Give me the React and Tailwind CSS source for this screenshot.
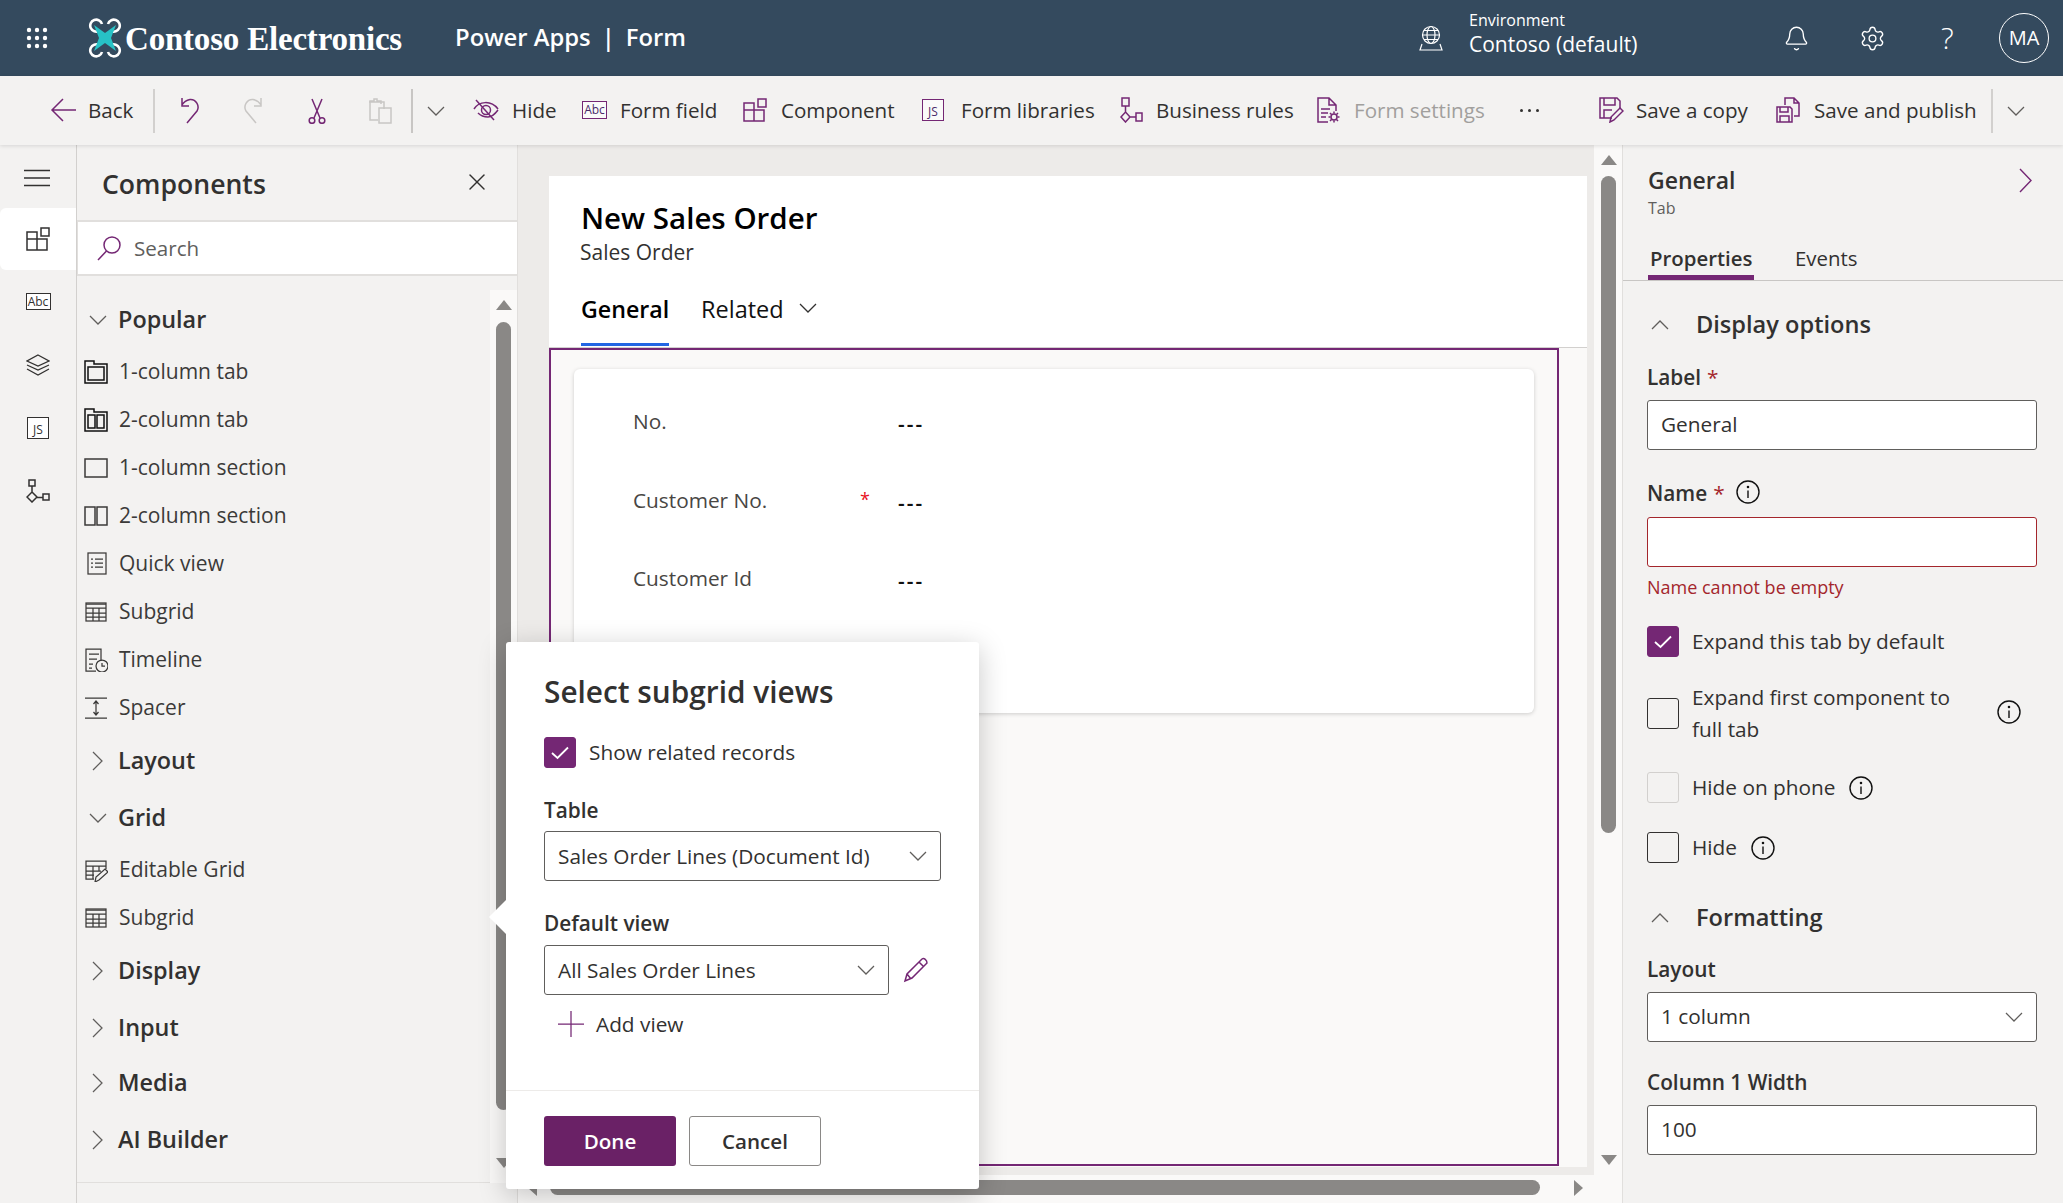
import { Bell, Settings, X } from "lucide-react";

const PURPLE = "#742774";

function Ic({ w = 24, h = 24, c = PURPLE, sw = 1.5, children, className }) {
  return (
    <svg width={w} height={h} viewBox={`0 0 ${w} ${h}`} fill="none" stroke={c} strokeWidth={sw} className={className}>
      {children}
    </svg>
  );
}

function Chevron({ dir = "down", size = 18, c = "#605e5c" }) {
  const d = {
    down: "M1 1 L9 9 L17 1",
    up: "M1 9 L9 1 L17 9",
    right: "M1 1 L10 10 L1 19",
  }[dir];
  const w = dir === "right" ? 12 : size;
  const h = dir === "right" ? 20 : 10;
  return <Ic w={w} h={h} c={c} sw={1.25}><path d={d} /></Ic>;
}

function Tri({ dir, c = "#8a8886" }) {
  const pts = { up: "0,10 8,0 16,10", down: "0,0 8,10 16,0", right: "0,0 9,8 0,16", left: "9,0 0,8 9,16" }[dir];
  const side = dir === "up" || dir === "down";
  return (
    <svg width={side ? 16 : 9} height={side ? 10 : 16}>
      <polygon points={pts} fill={c} />
    </svg>
  );
}

function Info({ c = "#111" }) {
  return (
    <Ic w={24} h={24} c={c} sw={1.4}>
      <circle cx="12" cy="12" r="11" />
      <path d="M12 10.5V18" />
      <circle cx="12" cy="7" r="0.6" fill={c} />
    </Ic>
  );
}

function Logo() {
  return (
    <svg width="34" height="40" viewBox="0 0 34 40" fill="none">
      <g stroke="#fff" strokeWidth="2.6">
        <path d="M11 13 A6 6 0 1 1 14 6" />
        <path d="M23 13 A6 6 0 1 0 20 6" />
        <path d="M11 27 A6 6 0 1 0 14 34" />
        <path d="M23 27 A6 6 0 1 1 20 34" />
      </g>
      <path d="M6 7 L17 15 L28 7 L23 20 L28 33 L17 25 L6 33 L11 20 Z" fill="#27c2c6" />
    </svg>
  );
}

function Waffle() {
  const pts = [3, 11, 19];
  return (
    <svg width="22" height="22" fill="#fff">
      {pts.map((y) => pts.map((x) => <circle key={`${x}-${y}`} cx={x} cy={y} r="2.2" />))}
    </svg>
  );
}

function Globe() {
  return (
    <Ic w={26} h={26} c="#fff" sw={1.2}>
      <circle cx="13" cy="10" r="8.5" />
      <ellipse cx="13" cy="10" rx="4" ry="8.5" />
      <path d="M4.5 10h17M6 5.5h14M6 14.5h14M4 19l-2 6h22l-2-6M2 25h22" />
    </Ic>
  );
}

const BoxText = ({ text, className }) => (
  <span className={`flex items-center justify-center bg-white/60 border-[1.5px] border-[#742774] text-[#4b2a6b] leading-none ${className}`}>
    {text}
  </span>
);

const icons = {
  back: <Ic w={26} h={24}><path d="M13 1 L2 12 L13 23 M2 12 H26" /></Ic>,
  undo: <Ic w={20} h={26}><path d="M7 25 L17 13 C20 8 16 1 10 1.5 C7 2 4 3.5 2 7 M2 0 V8 H9" /></Ic>,
  redo: <Ic w={20} h={26} c="#c8c6c4"><path d="M13 25 L3 13 C0 8 4 1 10 1.5 C13 2 16 3.5 18 7 M18 0 V8 H11" /></Ic>,
  cut: <Ic w={18} h={26}><path d="M4 1 L12 20 M14 1 L6 20" /><circle cx="4" cy="22.5" r="2.8" /><circle cx="14" cy="22.5" r="2.8" /></Ic>,
  paste: <Ic w={24} h={26} c="#c8c6c4"><path d="M13 6V3H9V1H6v2H2v19h8M1 4h15v7" /><rect x="11" y="10" width="12" height="15" /></Ic>,
  hide: <Ic w={26} h={24}><path d="M1 11 C6 3 18 2 25 11 M5 15 C8 18 11 19 15 19 C19 19 22 16 25 12" /><circle cx="13" cy="12" r="4.5" /><path d="M3 2 L21 22" /></Ic>,
  field: <BoxText text="Abc" className="w-[25px] h-[18px] text-[12px]" />,
  comp: <Ic w={24} h={24}><path d="M1 5 h10 v7 h10 v11 H1 Z M11 12 v11 M1 12 h10" /><rect x="15" y="1" width="8" height="8" /></Ic>,
  js: <BoxText text="JS" className="w-[22px] h-[22px] text-[12px] pt-[3px]" />,
  rules: <Ic w={24} h={26}><rect x="3" y="1" width="7" height="8" /><path d="M6.5 9V15M11 20H17M6.5 15l4.5 5-4.5 5L2 20z" /><rect x="17" y="16" width="6" height="8" /></Ic>,
  settings: <Ic w={24} h={26}><path d="M12 25H2V1h11l7 7v6M13 1v7h7M5 12h9M5 16h7M5 20h5" /><circle cx="18" cy="20" r="3" /><path d="M18 14.5v2M18 23.5v2M12.5 20h2M21.5 20h2M14 16l1.5 1.5M20.5 22.5L22 24M14 24l1.5-1.5M20.5 17.5L22 16" /></Ic>,
  copy: <Ic w={26} h={26}><path d="M14 21H2V1h17l3 3v8M6 1v7h11V1M6 21v-8h8" /><path d="M12 25 L13 20 L22 11 L25 14 L16 23 Z" /></Ic>,
  publish: <Ic w={26} h={26}><path d="M2 10h13l2 2v13H2z M5 10v5h8v-5M5 25v-6h9v6" /><path d="M10 8V1h9l5 5v13h-5M19 1v5h5" /></Ic>,
};

function Sep({ className = "bg-[#d2d0ce]" }) {
  return <div className={`w-[2px] h-[44px] shrink-0 ${className}`} />;
}

function Btn({ w, icon, label, muted, box = "w-[38px]" }) {
  return (
    <div className={`${w} flex items-center shrink-0`}>
      <span className={`${box} shrink-0 flex items-center`}>{icon}</span>
      <span className={`whitespace-nowrap ${muted ? "text-[#a19f9d]" : "text-[#323130]"}`}>{label}</span>
    </div>
  );
}

function Header() {
  return (
    <header className="h-[76px] shrink-0 bg-[#344a5e] text-white flex items-center">
      <div className="w-[88px] pl-[26px] shrink-0"><Waffle /></div>
      <Logo />
      <span className="[font-family:'Liberation_Serif',serif] font-bold text-[33px] ml-[3px] w-[330px] tracking-[-0.2px] pt-[3px]">Contoso Electronics</span>
      <span className="text-[23.8px] font-semibold">Power Apps</span>
      <span className="text-[23.8px] font-semibold mx-[11px]">|</span>
      <span className="text-[23.8px] font-semibold">Form</span>
      <div className="ml-auto flex items-center">
        <Globe />
        <div className="ml-[25px] w-[314px] mb-[9px]">
          <div className="text-[16px] leading-[20px] mb-[1px]">Environment</div>
          <div className="text-[21px] leading-[26px]">Contoso (default)</div>
        </div>
        <Bell size={27} strokeWidth={1.2} />
        <Settings size={27} strokeWidth={1.2} className="ml-[49px]" />
        <span className="ml-[55px] text-[30px] font-light leading-none w-[20px]">?</span>
        <div className="ml-[38px] mr-[14px] w-[50px] h-[50px] rounded-full border border-white flex items-center justify-center text-[20px]">MA</div>
      </div>
    </header>
  );
}

function Toolbar() {
  return (
    <div className="relative z-10 h-[69px] shrink-0 bg-[#f3f2f1] pl-[50px] flex items-center text-[20.6px] shadow-[0_1px_4px_rgba(0,0,0,0.12)]">
      <div className="w-[103px] flex items-center shrink-0">
        <span className="w-[38px]">{icons.back}</span>
        <span className="text-[#323130]">Back</span>
      </div>
      <Sep />
      <div className="w-[63px] flex justify-center shrink-0 ml-[3px]">{icons.undo}</div>
      <div className="w-[64px] flex justify-center shrink-0">{icons.redo}</div>
      <div className="w-[63px] flex justify-center shrink-0">{icons.cut}</div>
      <div className="w-[63px] flex justify-center shrink-0">{icons.paste}</div>
      <Sep className="bg-[#c8c6c4]" />
      <div className="w-[60px] pl-[14px] shrink-0"><Chevron /></div>
      <Btn w="w-[109px]" box="w-[39px]" icon={icons.hide} label="Hide" />
      <Btn w="w-[161px]" icon={icons.field} label="Form field" />
      <Btn w="w-[179px]" icon={icons.comp} label="Component" />
      <Btn w="w-[197px]" box="w-[39px]" icon={icons.js} label="Form libraries" />
      <Btn w="w-[197px]" box="w-[37px]" icon={icons.rules} label="Business rules" />
      <Btn w="w-[203px]" icon={icons.settings} label="Form settings" muted />
      <div className="w-[79px] shrink-0 pl-[1px] flex gap-[5px]">
        <i className="w-[3px] h-[3px] rounded-full bg-[#323130]" />
        <i className="w-[3px] h-[3px] rounded-full bg-[#323130]" />
        <i className="w-[3px] h-[3px] rounded-full bg-[#323130]" />
      </div>
      <Btn w="w-[177px]" icon={icons.copy} label="Save a copy" />
      <Btn w="w-[216px]" box="w-[39px]" icon={icons.publish} label="Save and publish" />
      <Sep />
      <div className="pl-[14px]"><Chevron /></div>
    </div>
  );
}

function Rail() {
  const rowClass = "h-[63px] flex items-center justify-center";
  const dark = "#323130";
  return (
    <nav className="w-[77px] shrink-0 border-r border-[#d2d0ce] bg-[#f3f2f1] flex flex-col">
      <div className="h-[63px] flex items-center justify-center pt-[2px] pr-[2px]">
        <Ic w={26} h={18} c={dark}><path d="M0 1.5h26M0 9h26M0 16.5h26" /></Ic>
      </div>
      <div className="h-[62px] bg-white rounded-l-md flex items-center justify-center">
        <Ic w={24} h={24} c={dark}><path d="M1 5 h10 v7 h10 v11 H1 Z M11 12 v11 M1 12 h10" /><rect x="15" y="1" width="8" height="8" /></Ic>
      </div>
      <div className={rowClass}><span className="w-[25px] h-[17px] border border-[#323130] bg-white text-[12px] leading-none text-[#323130] flex items-center justify-center">Abc</span></div>
      <div className={rowClass}>
        <Ic w={24} h={22} c={dark} sw={1.3}><path d="M12 1 L23 7 L12 12 L1 7 Z M1 11 L12 16 L23 11 M1 15 L12 21 L23 15" /></Ic>
      </div>
      <div className={rowClass}><span className="w-[22px] h-[22px] border border-[#323130] bg-white text-[12px] leading-none text-[#323130] pt-[4px] flex items-center justify-center">JS</span></div>
      <div className={rowClass}><Ic w={24} h={24} c={dark}><rect x="3" y="1" width="6" height="6" /><path d="M6 7v7M10.5 18.5H17M6 13l5 5-5 5-5-5z" /><rect x="17" y="15" width="6" height="6" /></Ic></div>
    </nav>
  );
}

const li = {
  tab1: <Ic c="#111"><path d="M1 23V1h9v3h13v19z" /><rect x="4" y="7" width="16" height="13" /></Ic>,
  tab2: <Ic c="#111"><path d="M1 23V1h9v3h13v19z" /><rect x="4" y="7" width="7" height="13" /><rect x="13" y="7" width="7" height="13" /></Ic>,
  sec1: <Ic c="#3b3a39"><rect x="1" y="3" width="22" height="18" /></Ic>,
  sec2: <Ic c="#3b3a39"><rect x="1" y="3" width="10" height="18" /><rect x="13" y="3" width="10" height="18" /></Ic>,
  quick: <Ic c="#3b3a39" sw={1.25}><rect x="4" y="1" width="18" height="21" /><path d="M7 7h2M11 7h8M7 11h2M11 11h8M7 15h2M11 15h8" /></Ic>,
  sub: <Ic c="#3b3a39" sw={1.25}><rect x="2" y="3" width="20" height="18" /><path d="M2 8h20M2 13h20M2 17h20M9 8v13M15 8v13M2 4h20" /></Ic>,
  time: <Ic c="#3b3a39" sw={1.25}><path d="M12 23H2V1h15v12M5 6h10M5 11h8M5 16h4M5 20h3" /><circle cx="18" cy="18" r="6" /><path d="M18 15v3h3" /></Ic>,
  spacer: <Ic c="#3b3a39" sw={1.25}><path d="M1 2h22M1 22h22M12 6v12M9.5 8L12 5l2.5 3M9.5 16l2.5 3 2.5-3" /></Ic>,
  edit: <Ic c="#3b3a39" sw={1.25}><path d="M10 21H2V3h20v8M2 8h20M2 13h15M2 17h8M9 8v13M15 8v5" /><path d="M11 24l1-5 9-8 3 3-9 8z" /></Ic>,
};

function Head({ label, open, h }) {
  return (
    <div className={`${h} flex items-center`}>
      <span className="w-[41px] flex justify-center shrink-0">
        {open ? <Chevron /> : <Chevron dir="right" />}
      </span>
      <span className="text-[23.4px] font-semibold text-[#323130]">{label}</span>
    </div>
  );
}

function Item({ icon, label }) {
  return (
    <div className="h-[48px] flex items-center">
      <span className="w-[35px] pl-[7px] shrink-0">{icon}</span>
      <span className="text-[21px] text-[#3b3a39] ml-[7px]">{label}</span>
    </div>
  );
}

function Components() {
  return (
    <aside className="w-[441px] shrink-0 bg-[#f3f2f1] border-r border-[#e1dfdd] flex flex-col">
      <div className="h-[75px] shrink-0 pl-[25px] pr-[26px] pt-[4px] flex items-center justify-between">
        <span className="text-[26.6px] font-semibold text-[#323130]">Components</span>
        <X size={28} strokeWidth={1.2} color="#323130" className="mb-[6px]" />
      </div>
      <div className="h-[56px] shrink-0 bg-white border-y-2 border-l border-[#e1dfdd] flex items-center pl-[18px]">
        <Ic w={26} h={26}><circle cx="16" cy="10" r="8" /><path d="M10.5 16 L2 25" /></Ic>
        <span className="text-[20.6px] text-[#605e5c] ml-[12px] pt-[1px]">Search</span>
      </div>
      <div className="flex h-[907px]">
        <div className="flex-1">
          <div className="w-full border-b border-[#e1dfdd] h-[907px] pt-[16px]">
            <Head label="Popular" open h="h-[56px]" />
            <Item icon={li.tab1} label="1-column tab" />
            <Item icon={li.tab2} label="2-column tab" />
            <Item icon={li.sec1} label="1-column section" />
            <Item icon={li.sec2} label="2-column section" />
            <Item icon={li.quick} label="Quick view" />
            <Item icon={li.sub} label="Subgrid" />
            <Item icon={li.time} label="Timeline" />
            <Item icon={li.spacer} label="Spacer" />
            <Head label="Layout" h="h-[58px]" />
            <Head label="Grid" open h="h-[56px]" />
            <Item icon={li.edit} label="Editable Grid" />
            <Item icon={li.sub} label="Subgrid" />
            <Head label="Display" h="h-[58px]" />
            <Head label="Input" h="h-[55px]" />
            <Head label="Media" h="h-[56px]" />
            <Head label="AI Builder" h="h-[58px]" />
          </div>
        </div>
        <div className="w-[27px] shrink-0 mt-[14px] h-[893px] bg-[#faf9f8] flex flex-col items-center pt-[10px]">
          <Tri dir="up" />
          <div className="w-[15px] h-[788px] mt-[12px] rounded-full bg-[#8a8886]" />
          <div className="mt-[48px]"><Tri dir="down" /></div>
        </div>
      </div>
    </aside>
  );
}

function Field({ label, star, value }) {
  return (
    <div className="h-[78.5px] flex items-start pl-[59px] text-[20.8px]">
      <span className="w-[227px] leading-[40px] text-[#484644]">{label}</span>
      <span className="w-[38px] text-[#e81123] text-[18px] leading-[38px]">{star ? "*" : ""}</span>
      <span className="leading-[46px] font-semibold text-[#111] tracking-[2px]">{value}</span>
    </div>
  );
}

function Canvas() {
  return (
    <main className="flex-1 min-w-0 flex flex-col">
      <div className="h-[1030px] flex">
        <div className="flex-1 bg-[#edebe9] pl-[31px] pr-[7px] pt-[31px] pb-[8px] flex flex-col">
          <div className="h-[172px] shrink-0 bg-white border-b border-[#d2d0ce] pl-[32px] pt-[24px]">
            <div className="text-[29.5px] leading-[36px] font-semibold text-black">New Sales Order</div>
            <div className="text-[21px] leading-[24px] mt-[4px] text-[#323130] font-medium -ml-[1px]">Sales Order</div>
            <div className="flex items-start mt-[28px]">
              <div className="h-[54px] border-b-[3px] border-[#2266e3] text-[23.2px] font-semibold leading-[34px] text-black w-[88px] mr-[32px]">General</div>
              <div className="text-[23.5px] leading-[34px] text-[#111] mr-[15px]">Related</div>
              <div className="pt-[11px]"><Chevron c="#323130" /></div>
            </div>
          </div>
          <div className="flex-1 bg-[#faf9f8]">
            <div className="w-[1010px] h-[818px] border-2 border-[#742774] pl-[23px] pt-[19px]">
              <div className="w-[960px] h-[344px] bg-white rounded-md shadow-[0_1px_4px_rgba(0,0,0,0.18)] pt-[32px]">
                <Field label="No." value="---" />
                <Field label="Customer No." star value="---" />
                <Field label="Customer Id" value="---" />
              </div>
            </div>
          </div>
        </div>
        <div className="w-[28px] shrink-0 bg-[#faf9f8] flex flex-col items-center pt-[10px] pl-[1px]">
          <Tri dir="up" />
          <div className="w-[15px] h-[657px] mt-[11px] rounded-full bg-[#8a8886]" />
          <div className="mt-[322px]"><Tri dir="down" /></div>
        </div>
      </div>
      <div className="h-[28px] shrink-0 bg-[#faf9f8] flex items-center pl-[10px] pb-[3px]">
        <Tri dir="left" />
        <div className="w-[990px] h-[15px] ml-[13px] rounded-full bg-[#8a8886]" />
        <div className="ml-[34px]"><Tri dir="right" /></div>
      </div>
    </main>
  );
}

function Input({ value, children, error, className = "" }) {
  return (
    <div className={`h-[50px] bg-white rounded-[3px] border flex items-center pl-[13px] pr-[13px] text-[20.8px] text-[#323130] ${error ? "border-[#a4262c]" : "border-[#605e5c]"} ${className}`}>
      <span className="flex-1 whitespace-nowrap">{value}</span>
      {children}
    </div>
  );
}

function Check({ on, muted }) {
  return (
    <span className={`w-[32px] h-[31px] shrink-0 rounded-[3px] border flex items-center justify-center ${on ? "bg-[#742774] border-[#742774]" : muted ? "border-[#d2d0ce]" : "border-[#323130]"}`}>
      {on && <Ic w={18} h={14} c="#fff" sw={1.8}><path d="M1 7 L6.5 12 L17 1.5" /></Ic>}
    </span>
  );
}

function Label({ children, className = "" }) {
  return <div className={`text-[20.8px] leading-[24px] font-semibold text-[#323130] ${className}`}>{children}</div>;
}

const Req = () => <span className="text-[#a4262c] ml-[6px] font-normal">*</span>;

function RightPanel() {
  return (
    <aside className="w-[441px] shrink-0 bg-[#f3f2f1] border-l border-[#e1dfdd]">
      <div className="pl-[25px] pr-[26px] pt-[20px] h-[98px] relative">
        <div className="text-[23px] leading-[30px] font-semibold text-[#323130]">General</div>
        <div className="text-[16px] leading-[20px] mt-[3px] text-[#605e5c]">Tab</div>
        <div className="absolute right-[30px] top-[23px]">
          <Ic w={14} h={25} sw={1.4}><path d="M1 1 L12 12.5 L1 24" /></Ic>
        </div>
      </div>
      <div className="h-[38px] border-b border-[#c8c6c4] pl-[25px] flex items-start text-[20.4px] text-[#323130]">
        <div className="h-[37px] border-b-[5px] border-[#742774] font-semibold leading-[30px] px-[2px] w-[106px] whitespace-nowrap">Properties</div>
        <div className="ml-[41px] leading-[30px]">Events</div>
      </div>
      <div className="pl-[24px] pr-[26px]">
        <div className="h-[50px] mt-[19px] flex items-center">
          <span className="w-[49px] pl-[4px]"><Chevron dir="up" /></span>
          <span className="text-[23.6px] font-semibold text-[#323130]">Display options</span>
        </div>
        <Label className="mt-[15px]">Label<Req /></Label>
        <Input value="General" className="mt-[11px]" />
        <Label className="mt-[30px] flex items-center">
          Name<Req />
          <span className="ml-[11px] mb-[2px]"><Info /></span>
        </Label>
        <Input error value="" className="mt-[11px]" />
        <div className="mt-[10px] text-[18px] leading-[20px] text-[#a4262c]">Name cannot be empty</div>
        <div className="mt-[29px] flex items-center text-[20.8px] text-[#323130]">
          <Check on />
          <span className="ml-[13px]">Expand this tab by default</span>
        </div>
        <div className="mt-[24px] flex items-center text-[20.8px] leading-[32px] text-[#323130]">
          <Check />
          <span className="ml-[13px] w-[305px]">Expand first component to<br />full tab</span>
          <span className="mb-[3px]"><Info /></span>
        </div>
        <div className="mt-[27px] flex items-center text-[20.8px] text-[#323130]">
          <Check muted />
          <span className="ml-[13px]">Hide on phone</span>
          <span className="ml-[14px]"><Info /></span>
        </div>
        <div className="mt-[29px] flex items-center text-[20.8px] text-[#323130]">
          <Check />
          <span className="ml-[13px]">Hide</span>
          <span className="ml-[14px]"><Info /></span>
        </div>
        <div className="h-[50px] mt-[29px] flex items-center">
          <span className="w-[49px] pl-[4px]"><Chevron dir="up" /></span>
          <span className="text-[23.6px] font-semibold text-[#323130]">Formatting</span>
        </div>
        <Label className="mt-[14px]">Layout</Label>
        <Input value="1 column" className="mt-[11px]"><Chevron /></Input>
        <Label className="mt-[28px]">Column 1 Width</Label>
        <Input value="100" className="mt-[11px]" />
      </div>
    </aside>
  );
}

function Popover() {
  return (
    <div className="absolute left-[506px] top-[642px] z-20 w-[473px] h-[547px] bg-white rounded-[3px] shadow-[0_6px_28px_rgba(0,0,0,0.22)] flex flex-col">
      <div className="absolute left-[-12px] top-[263px] w-[24px] h-[24px] bg-white rotate-45" />
      <div className="relative flex-1 pl-[38px] pt-[32px]">
        <div className="text-[29.8px] leading-[36px] font-semibold text-[#323130]">Select subgrid views</div>
        <div className="mt-[27px] flex items-center text-[20.8px] text-[#323130]">
          <Check on />
          <span className="ml-[13px]">Show related records</span>
        </div>
        <Label className="mt-[30px]">Table</Label>
        <Input value="Sales Order Lines (Document Id)" className="mt-[9px] w-[397px]"><Chevron /></Input>
        <Label className="mt-[30px]">Default view</Label>
        <div className="mt-[10px] flex items-center">
          <Input value="All Sales Order Lines" className="w-[345px]"><Chevron /></Input>
          <span className="ml-[14px]">
            <Ic w={26} h={26}><path d="M2 24 L4 17 L19 2 C21 0.5 24 3 24 6 L9 21 Z M16 5 L21 10 M4 17 L8 22" /></Ic>
          </span>
        </div>
        <div className="mt-[13px] flex items-center h-[32px] pl-[14px] text-[20.8px] text-[#323130]">
          <Ic w={26} h={26} sw={1.25}><path d="M0 13H26M13 0V26" /></Ic>
          <span className="ml-[12px]">Add view</span>
        </div>
      </div>
      <div className="relative h-[99px] border-t border-[#edebe9] pl-[38px] pt-[25px] flex gap-[13px] text-[20.6px] font-semibold">
        <div className="w-[132px] h-[50px] rounded-[3px] bg-[#6a2166] text-white flex items-center justify-center">Done</div>
        <div className="w-[132px] h-[50px] rounded-[3px] bg-white border border-[#8a8886] text-[#323130] flex items-center justify-center">Cancel</div>
      </div>
    </div>
  );
}

export default function App() {
  return (
    <div className="relative w-[2063px] h-[1203px] overflow-hidden flex flex-col bg-[#f3f2f1] [font-family:'Open_Sans',sans-serif]">
      <Header />
      <Toolbar />
      <div className="flex-1 min-h-0 flex">
        <Rail />
        <Components />
        <Canvas />
        <RightPanel />
      </div>
      <Popover />
    </div>
  );
}
